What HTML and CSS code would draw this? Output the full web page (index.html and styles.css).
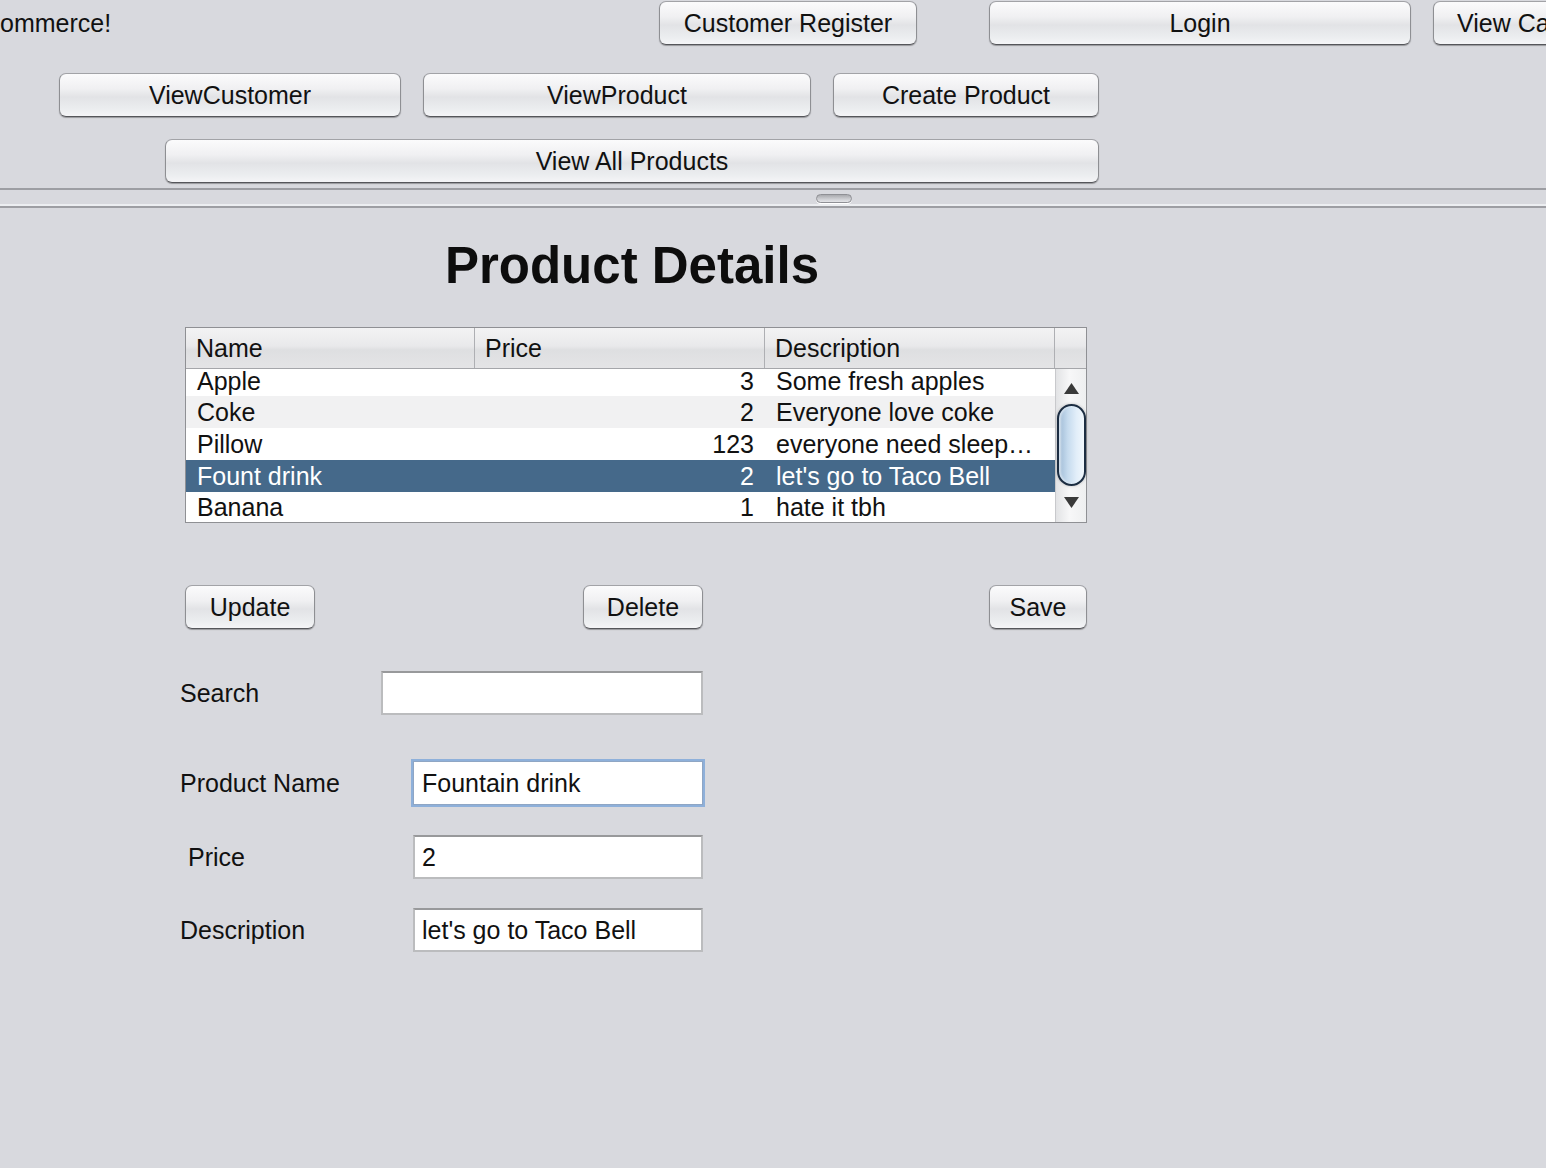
FILE: index.html
```html
<!DOCTYPE html>
<html>
<head>
<meta charset="utf-8">
<title>Product Details</title>
<link rel="stylesheet" href="styles.css">
</head>
<body>
<div class="top">
  <div class="row r1">
    <div class="brand">ommerce!</div>
    <button class="btn b-reg">Customer Register</button>
    <button class="btn b-login">Login</button>
    <button class="btn b-cart">View Cart</button>
  </div>
  <div class="row r2">
    <button class="btn b-vc">ViewCustomer</button>
    <button class="btn b-vp">ViewProduct</button>
    <button class="btn b-cp">Create Product</button>
  </div>
  <div class="row r3">
    <button class="btn b-all">View All Products</button>
  </div>
</div>
<div class="divider"><span class="grip"></span></div>
<div class="main">
  <h1 class="title">Product Details</h1>
  <div class="table">
    <div class="thead">
      <div class="th c1">Name</div>
      <div class="th c2">Price</div>
      <div class="th c3">Description</div>
      <div class="th c4"></div>
    </div>
    <div class="tbody">
      <div class="rows">
        <div class="tr first"><div class="td c1">Apple</div><div class="td c2 num">3</div><div class="td c3">Some fresh apples</div></div>
        <div class="tr alt"><div class="td c1">Coke</div><div class="td c2 num">2</div><div class="td c3">Everyone love coke</div></div>
        <div class="tr"><div class="td c1">Pillow</div><div class="td c2 num">123</div><div class="td c3">everyone need sleep…</div></div>
        <div class="tr sel"><div class="td c1">Fount drink</div><div class="td c2 num">2</div><div class="td c3">let's go to Taco Bell</div></div>
        <div class="tr last"><div class="td c1">Banana</div><div class="td c2 num">1</div><div class="td c3">hate it tbh</div></div>
      </div>
      <div class="sb">
        <svg class="arrow up" width="15" height="11" viewBox="0 0 15 11"><path d="M7.5 0 L15 11 H0 Z" fill="#3a3a3a"/></svg>
        <div class="thumb"></div>
        <svg class="arrow down" width="15" height="11" viewBox="0 0 15 11"><path d="M0 0 H15 L7.5 11 Z" fill="#3a3a3a"/></svg>
      </div>
    </div>
  </div>
  <div class="actions">
    <button class="btn a-upd">Update</button>
    <button class="btn a-del">Delete</button>
    <button class="btn a-save">Save</button>
  </div>
  <div class="form">
    <div class="frow f-search">
      <div class="label l-search">Search</div>
      <div class="field w-search"></div>
    </div>
    <div class="frow f-name">
      <div class="label l-wide">Product Name</div>
      <div class="field focused">Fountain drink</div>
    </div>
    <div class="frow f-price">
      <div class="label l-wide l-indent">Price</div>
      <div class="field">2</div>
    </div>
    <div class="frow f-desc">
      <div class="label l-wide">Description</div>
      <div class="field">let's go to Taco Bell</div>
    </div>
  </div>
</div>
</body>
</html>
```

FILE: styles.css
```css
html, body {
  margin: 0;
  padding: 0;
}
body {
  background: #d8d9de;
  font-family: "Liberation Sans", Arial, sans-serif;
  font-size: 25px;
  color: #111;
  width: 1546px;
  height: 1168px;
  overflow: hidden;
}

.top {
  padding-top: 1px;
}
.row {
  display: flex;
  align-items: center;
  height: 44px;
  white-space: nowrap;
}
.r2 { margin-top: 28px; }
.r3 { margin-top: 22px; }

.brand {
  flex: none;
  width: 659px;
}

.btn {
  box-sizing: border-box;
  flex: none;
  height: 44px;
  padding: 0;
  display: flex;
  align-items: center;
  justify-content: center;
  font: inherit;
  color: #111;
  border: 1px solid #8e8f93;
  border-top-color: #a2a3a7;
  border-bottom-color: #55565a;
  border-radius: 7px;
  background: linear-gradient(#fbfbfc 0%, #f0f0f2 35%, #e2e3e6 55%, #eceef0 85%, #f5f5f7 100%);
  box-shadow: 0 1px 1px rgba(0, 0, 0, 0.3);
  white-space: nowrap;
  overflow: hidden;
}

.b-reg { width: 258px; }
.b-login { width: 422px; margin-left: 72px; }
.b-cart { width: 200px; margin-left: 22px; justify-content: flex-start; padding-left: 23px; }
.b-vc { width: 342px; margin-left: 59px; }
.b-vp { width: 388px; margin-left: 22px; }
.b-cp { width: 266px; margin-left: 22px; }
.b-all { width: 934px; margin-left: 165px; }

.divider {
  margin-top: 5px;
  height: 16px;
  border-top: 2px solid #9d9ea3;
  border-bottom: 2px solid #9d9ea3;
  box-shadow: inset 0 -2px 0 #eceef1;
  display: flex;
  align-items: flex-start;
}
.grip {
  margin-left: 816px;
  margin-top: 4px;
  width: 36px;
  height: 9px;
  box-sizing: border-box;
  border: 1px solid #8f9095;
  border-radius: 5px;
  background: linear-gradient(#a9aaae, #cfd0d4 60%, #e4e5e8);
  box-shadow: 0 1px 0 #ffffff;
}

.main {
  padding-left: 185px;
}
.title {
  margin: 28px 0 0;
  width: 902px;
  box-sizing: border-box;
  padding-right: 8px;
  text-align: center;
  font-size: 51px;
  line-height: 60px;
  font-weight: bold;
  color: #0d0d0d;
}

.table {
  margin-top: 31px;
  width: 902px;
  box-sizing: border-box;
  border: 1px solid #8f9094;
  background: #fff;
}
.thead {
  display: flex;
  height: 40px;
  border-bottom: 1px solid #a5a6aa;
  background: linear-gradient(#f3f3f4 0%, #e9e9eb 45%, #dedfe1 55%, #e4e4e6 100%);
}
.th {
  box-sizing: border-box;
  display: flex;
  align-items: center;
  padding-left: 10px;
  padding-top: 1px;
  border-right: 1px solid #aeafb3;
  white-space: nowrap;
}
.c1 { width: 289px; }
.c2 { width: 290px; }
.c3 { width: 290px; }
.th.c4 { width: 31px; border-right: none; }

.tbody {
  display: flex;
  height: 153px;
}
.rows {
  width: 869px;
  flex: none;
}
.tr {
  display: flex;
  height: 32px;
  align-items: center;
}
.tr.first {
  height: 27px;
  align-items: flex-start;
}
.tr.first .td {
  line-height: 24px;
}
.tr.last {
  height: 30px;
}
.tr.alt { background: #f1f1f2; }
.tr.sel { background: #45698a; color: #fff; }
.td {
  box-sizing: border-box;
  padding: 0 11px;
  white-space: nowrap;
}
.td.num { text-align: right; }

.sb {
  flex: none;
  width: 31px;
  height: 153px;
  box-sizing: border-box;
  border-left: 1px solid #c8c9cc;
  background: linear-gradient(to right, #e2e3e5, #f7f7f8 45%, #eeeff0 100%);
  display: flex;
  flex-direction: column;
  align-items: center;
}
.arrow { flex: none; display: block; }
.arrow.up { margin-top: 14px; }
.thumb {
  flex: none;
  margin-top: 10px;
  width: 29px;
  height: 82px;
  box-sizing: border-box;
  border: 2px solid #1c2d42;
  border-radius: 15px;
  background: linear-gradient(to right, #9fbbd6 0%, #c6dbee 35%, #e2eef9 70%, #f1f7fc 100%);
  box-shadow: inset 2px 0 2px rgba(255, 255, 255, 0.5), 0 0 3px rgba(0, 0, 0, 0.25);
}
.arrow.down { margin-top: 11px; }

.actions {
  display: flex;
  margin-top: 62px;
  height: 45px;
}
.a-upd { width: 130px; }
.a-del { width: 120px; margin-left: 268px; }
.a-save { width: 98px; margin-left: 286px; }

.form {
  margin-left: -5px;
}
.frow {
  display: flex;
  align-items: center;
}
.f-search { margin-top: 41px; }
.f-name { margin-top: 46px; }
.f-price { margin-top: 30px; }
.f-desc { margin-top: 29px; }

.label {
  flex: none;
  white-space: nowrap;
}
.l-search { width: 201px; }
.l-wide { width: 233px; }
.l-indent { padding-left: 8px; box-sizing: border-box; }

.field {
  flex: none;
  box-sizing: border-box;
  width: 290px;
  height: 44px;
  padding-left: 7px;
  display: flex;
  align-items: center;
  background: #fff;
  border: 2px solid #bbbcbe;
  border-top-color: #98999b;
  white-space: nowrap;
  overflow: hidden;
}
.field.w-search { width: 322px; }
.field.focused {
  border: 1px solid #8fa6c4;
  padding-left: 8px;
  box-shadow: 0 0 0 2px #8eb0da;
}
```
